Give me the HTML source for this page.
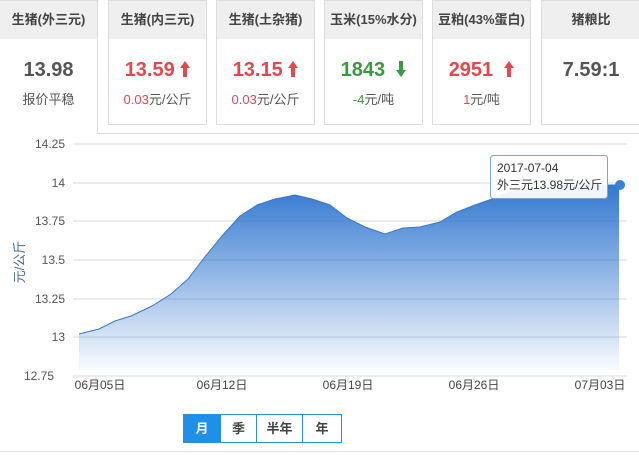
<!DOCTYPE html>
<html><head><meta charset="utf-8"><style>
body{margin:0;width:639px;height:455px;background:#fff;position:relative;overflow:hidden;font-family:"Liberation Sans","Noto Sans CJK SC",sans-serif}
.c{position:absolute;top:0;height:125px;border:1px solid #ddd;box-sizing:border-box;background:#fff;text-align:center}
.c .h{height:38px;background:#efefef;line-height:38px;font-size:13px;font-weight:bold;color:#444}
.c .v{font-size:20px;font-weight:bold;margin-top:18px;height:26px;line-height:26px}
.c .s{font-size:13px;color:#555;margin-top:6px}
.r{color:#e8464e}.g{color:#3a9a3e}.k{color:#555}
.ar{display:inline-block;vertical-align:-1px}
.btn{position:absolute;top:414px;height:29px;border:1px solid #2b8fd8;box-sizing:border-box;line-height:27px;text-align:center;font-size:13px;font-weight:bold;color:#444}
</style></head><body>
<div class="c" style="left:0;width:98px;height:134px;border-bottom:none;border-left:none"><div class="h">生猪(外三元)</div><div class="v k">13.98</div><div class="s">报价平稳</div></div>
<div style="position:absolute;left:97px;top:133px;width:542px;height:1px;background:#ddd"></div>
<div class="c" style="left:108px;width:99px"><div class="h">生猪(内三元)</div><div class="v r">13.59 <svg class="ar" width="10" height="16" viewBox="0 0 10 16"><path d="M5 0L10 7H7V16H3V7H0Z" fill="#e8464e"/></svg></div><div class="s"><span class="r">0.03</span>元/公斤</div></div>
<div class="c" style="left:216px;width:99px"><div class="h">生猪(土杂猪)</div><div class="v r">13.15 <svg class="ar" width="10" height="16" viewBox="0 0 10 16"><path d="M5 0L10 7H7V16H3V7H0Z" fill="#e8464e"/></svg></div><div class="s"><span class="r">0.03</span>元/公斤</div></div>
<div class="c" style="left:324px;width:99px"><div class="h">玉米(15%水分)</div><div class="v g">1843 &nbsp;<svg class="ar" width="10" height="16" viewBox="0 0 10 16"><path d="M5 16L10 9H7V0H3V9H0Z" fill="#3a9a3e"/></svg></div><div class="s"><span class="g">-4</span>元/吨</div></div>
<div class="c" style="left:432px;width:99px"><div class="h">豆粕(43%蛋白)</div><div class="v r">2951 &nbsp;<svg class="ar" width="10" height="16" viewBox="0 0 10 16"><path d="M5 0L10 7H7V16H3V7H0Z" fill="#e8464e"/></svg></div><div class="s"><span class="r">1</span>元/吨</div></div>
<div class="c" style="left:541px;width:99px;border-right:none"><div class="h">猪粮比</div><div class="v k">7.59:1</div></div>
<svg style="position:absolute;left:0;top:134px" width="639" height="260" font-family="Liberation Sans" font-size="12" fill="#555">
<defs><linearGradient id="gr" x1="0" y1="0" x2="0" y2="1"><stop offset="0" stop-color="#3277d0"/><stop offset="1" stop-color="#3277d0" stop-opacity="0.03"/></linearGradient></defs>
<g stroke="#d8d8d8" stroke-width="1">
<line x1="73" y1="10" x2="627" y2="10"/><line x1="73" y1="49" x2="627" y2="49"/><line x1="73" y1="87" x2="627" y2="87"/><line x1="73" y1="126" x2="627" y2="126"/><line x1="73" y1="165" x2="627" y2="165"/><line x1="73" y1="203" x2="627" y2="203"/><line x1="73" y1="242" x2="627" y2="242"/>
<line x1="96" y1="242" x2="96" y2="248"/><line x1="222" y1="242" x2="222" y2="248"/><line x1="348" y1="242" x2="348" y2="248"/><line x1="474" y1="242" x2="474" y2="248"/><line x1="600" y1="242" x2="600" y2="248"/>
</g>
<g text-anchor="end"><text x="65" y="14">14.25</text><text x="65" y="53">14</text><text x="65" y="91">13.75</text><text x="65" y="130">13.5</text><text x="65" y="169">13.25</text><text x="65" y="207">13</text><text x="54" y="246">12.75</text></g>
<path d="M79,200 L99,195 L115,187 L131,182 L152,172 L171,160 L188,145 L204,124 L222,102 L240,82 L257,71 L275,65 L295,61 L312,65 L330,71 L347,84 L365,93 L385,100 L403,94 L420,93 L440,88 L457,78 L475,71 L492,65 L510,58 L530,54 L560,52 L590,51 L619,51 L619,236 L79,236 Z" fill="url(#gr)"/>
<path d="M79,200 L99,195 L115,187 L131,182 L152,172 L171,160 L188,145 L204,124 L222,102 L240,82 L257,71 L275,65 L295,61 L312,65 L330,71 L347,84 L365,93 L385,100 L403,94 L420,93 L440,88 L457,78 L475,71 L492,65 L510,58 L530,54 L560,52 L590,51 L619,51" fill="none" stroke="#3a78c8" stroke-width="1"/>
<circle cx="620" cy="51" r="5" fill="#3a7fd5"/>
<text x="24" y="128" transform="rotate(-90 24 128)" text-anchor="middle" font-size="13" fill="#4a6c96" font-family="Liberation Sans,Noto Sans CJK SC,sans-serif">元/公斤</text>
<g font-family="Liberation Sans,Noto Sans CJK SC,sans-serif" font-size="12" fill="#444" text-anchor="middle"><text x="100" y="255">06月05日</text><text x="222" y="255">06月12日</text><text x="348" y="255">06月19日</text><text x="474" y="255">06月26日</text><text x="600" y="255">07月03日</text></g>
<rect x="490.5" y="21.5" width="117" height="43" rx="3" fill="#fff" fill-opacity="0.93" stroke="#7fa5d6"/>
<g font-family="Liberation Sans,Noto Sans CJK SC,sans-serif" font-size="12" fill="#333"><text x="497" y="38">2017-07-04</text><text x="497" y="55">外三元13.98元/公斤</text></g>
</svg>
<div class="btn" style="left:183px;width:38px;background:#1e90e8;color:#fff">月</div>
<div class="btn" style="left:220px;width:37px">季</div>
<div class="btn" style="left:256px;width:47px">半年</div>
<div class="btn" style="left:302px;width:40px">年</div>
<div style="position:absolute;left:0;top:451px;width:639px;height:1px;background:#e2e2e2"></div>
</body></html>
